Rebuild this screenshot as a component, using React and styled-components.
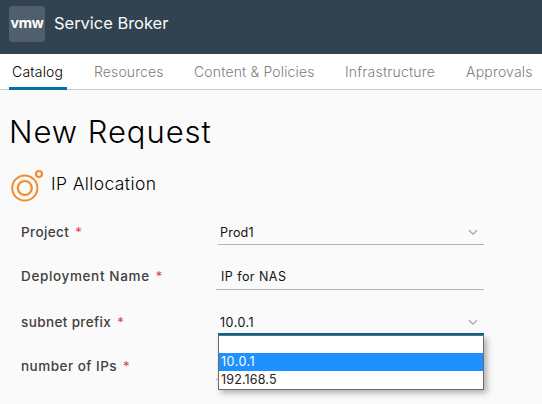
import React from "react";
import styled, { createGlobalStyle } from "styled-components";

const GlobalStyle = createGlobalStyle`
  * { box-sizing: border-box; }
  body {
    margin: 0;
    background: #fafafa;
    color: #000;
    font-family: Inter, "Noto Sans", sans-serif;
    overflow: hidden;
  }
`;

const Page = styled.div`
  width: 542px;
  height: 404px;
  overflow: hidden;
  background: #fafafa;
`;

const Header = styled.header`
  display: flex;
  align-items: flex-start;
  height: 54px;
  padding: 6px 9px;
  gap: 9px;
  background: #314351;
`;

const Logo = styled.div`
  width: 36px;
  height: 36px;
  border-radius: 3px;
  background: #515f6c;
  color: #fff;
  text-align: center;
  font: 700 14px/34px "Noto Sans", sans-serif;
  letter-spacing: -0.4px;
`;

const Text = styled.span`
  white-space: nowrap;
  letter-spacing: ${(p) => p.$track || 0}px;
`;

const Product = styled(Text)`
  color: #fafafa;
  font-size: 16.5px;
  line-height: 34px;
`;

const Nav = styled.nav`
  display: flex;
  height: 36px;
  padding-left: 9px;
  background: #fff;
  border-bottom: 1px solid #ccc;
`;

const Tab = styled.a`
  flex: none;
  width: ${(p) => p.$width}px;
  height: 36px;
  margin-right: ${(p) => p.$gap}px;
  padding-left: 3px;
  border-bottom: 3px solid ${(p) => (p.$active ? "#0072a3" : "transparent")};
  color: ${(p) => (p.$active ? "#000" : "#808080")};
  font-size: 14px;
  font-weight: 300;
  line-height: 36px;
`;

const Title = styled.h1`
  margin: 22px 0 0 9px;
  font-size: 31px;
  font-weight: 300;
  line-height: 40px;
`;

const Item = styled.div`
  display: flex;
  height: 46px;
  margin-top: 12px;
  padding-left: 9px;
  font-size: 17.5px;
  font-weight: 300;
  line-height: 40px;
`;

const ItemIcon = styled.svg`
  width: 36px;
  height: 40px;
  margin-right: 6px;
`;

const Form = styled.form`
  display: grid;
  grid-template-columns: 195px 268px;
  grid-template-rows: 35px 45px 45px 45px;
  padding: 0 0 0 21px;
`;

const Label = styled.label`
  display: flex;
  align-items: flex-end;
  gap: 6px;
  padding-bottom: ${(p) => p.$drop}px;
  color: #404040;
  font-size: 13.5px;
  font-weight: 500;
  line-height: 18px;
`;

const Required = styled.span`
  color: #d9434b;
  font-size: 13px;
  font-weight: 400;
  line-height: 17px;
`;

const Field = styled.div`
  position: relative;
  display: flex;
  align-items: flex-end;
  justify-content: space-between;
  margin-left: ${(p) => (p.$select ? 2 : 0)}px;
  padding: 0 6px ${(p) => (p.$select ? (p.$focus ? 1 : 2) : 3)}px ${(p) => (p.$select ? 2 : 5)}px;
  border-bottom: ${(p) => (p.$focus ? "2px solid #006a98" : "1px solid #b3b3b3")};
  color: #111;
  font-size: 12.5px;
  line-height: 18px;
`;

const Chevron = styled.svg`
  width: 10px;
  height: 7px;
  margin-bottom: 6px;
`;

const Menu = styled.div`
  position: absolute;
  z-index: 2;
  top: 100%;
  left: 0;
  right: 0;
  height: 55px;
  border: 1px solid #6b6b6b;
  background: #fff;
  box-shadow: 3px 3px 6px rgba(0, 0, 0, 0.3);
  margin-top: 2px;
`;

const Option = styled.div`
  height: ${(p) => (p.$first ? 17 : 18)}px;
  padding-left: 2px;
  background: ${(p) => (p.$selected ? "#1e90ff" : "#fff")};
  color: ${(p) => (p.$selected ? "#fff" : "#222")};
`;

const Arrow = () => (
  <Chevron viewBox="0 0 10 7">
    <path d="M1 1.2 5 5.2 9 1.2" fill="none" stroke="#a6a6a6" strokeWidth="1.3" />
  </Chevron>
);

const tabs = [
  { name: "Catalog", width: 58, gap: 24, track: 0.2, active: true },
  { name: "Resources", width: 76, gap: 24, track: 0.12 },
  { name: "Content & Policies", width: 127, gap: 24, track: 0.15 },
  { name: "Infrastructure", width: 97, gap: 24, track: 0.2 },
  { name: "Approvals", width: 74, gap: 0, track: 0.2 },
];

const FieldLabel = ({ children, track, drop = 4 }) => (
  <Label $drop={drop}>
    <Text $track={track}>{children}</Text>
    <Required>*</Required>
  </Label>
);

export default function App() {
  return (
    <Page>
      <GlobalStyle />
      <Header>
        <Logo>vmw</Logo>
        <Product $track={-0.03}>Service Broker</Product>
      </Header>
      <Nav>
        {tabs.map((t) => (
          <Tab key={t.name} $width={t.width} $gap={t.gap} $active={t.active}>
            <Text $track={t.track}>{t.name}</Text>
          </Tab>
        ))}
      </Nav>
      <Title><Text $track={0.95}>New Request</Text></Title>
      <Item>
        <ItemIcon viewBox="0 0 36 40" fill="none" stroke="#f38b2e">
          <circle cx="15.8" cy="24" r="12.6" strokeWidth="2" />
          <circle cx="15.8" cy="24" r="7" strokeWidth="2.2" />
          <circle cx="30" cy="10" r="3" strokeWidth="2.2" />
        </ItemIcon>
        <Text $track={0.38}>IP Allocation</Text>
      </Item>
      <Form>
        <FieldLabel track={0.4}>Project</FieldLabel>
        <Field $select><Text $track={0.2}>Prod1</Text><Arrow /></Field>
        <FieldLabel track={0.64} drop={5}>Deployment Name</FieldLabel>
        <Field><Text $track={0.45}>IP for NAS</Text></Field>
        <FieldLabel track={0.38}>subnet prefix</FieldLabel>
        <Field $select $focus>
          <Text $track={0.5}>10.0.1</Text><Arrow />
          <Menu>
            <Option $first />
            <Option $selected><Text $track={0.5}>10.0.1</Text></Option>
            <Option><Text $track={0.15}>192.168.5</Text></Option>
          </Menu>
        </Field>
        <FieldLabel track={0.48} drop={5}>number of IPs</FieldLabel>
        <Field />
      </Form>
    </Page>
  );
}
